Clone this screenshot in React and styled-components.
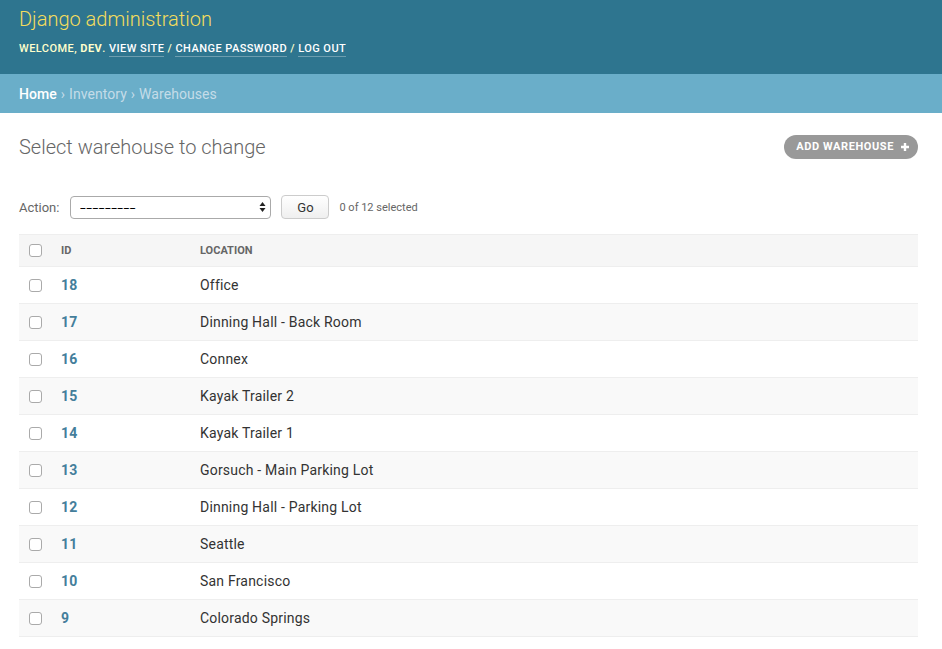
import React from "react";
import styled, { createGlobalStyle } from "styled-components";

const GlobalStyle = createGlobalStyle`
    html, body {
        margin: 0;
        padding: 0;
        background: #fff;
        font-family: Roboto, "Liberation Sans", sans-serif;
        color: #333;
        font-size: 14px;
    }
`;

const rows = [
    [18, "Office"],
    [17, "Dinning Hall - Back Room"],
    [16, "Connex"],
    [15, "Kayak Trailer 2"],
    [14, "Kayak Trailer 1"],
    [13, "Gorsuch - Main Parking Lot"],
    [12, "Dinning Hall - Parking Lot"],
    [11, "Seattle"],
    [10, "San Francisco"],
    [9, "Colorado Springs"],
];

const Header = styled.div`
    background: #2e758f;
    height: 74px;
    padding: 0 19px;
    box-sizing: border-box;
    display: flex;
    flex-direction: column;
`;

const Branding = styled.h1`
    margin: 6px 0 0;
    font-size: 20px;
    font-weight: 300;
    color: #f5dd5d;
    line-height: 26px;
`;

const UserTools = styled.div`
    margin-top: 10px;
    font-size: 11px;
    letter-spacing: 0.45px;
    text-transform: uppercase;
    color: #ffc;
    font-weight: 500;
    line-height: 14px;

    strong {
        font-weight: 700;
    }
`;

const ToolLink = styled.a`
    color: #fff;
    font-weight: 500;
    text-decoration: none;
    border-bottom: 1px solid rgba(255, 255, 255, 0.3);
    padding-bottom: 1px;
`;

const Breadcrumbs = styled.div`
    background: #6aaec9;
    height: 39px;
    padding: 0 19px;
    display: flex;
    align-items: center;
    font-size: 14px;
    letter-spacing: 0.05px;
    color: #c4dce8;

    a {
        color: #c4dce8;
        text-decoration: none;
    }
    a.home {
        color: #fff;
        font-weight: 500;
    }
`;

const Sep = styled.span`
    margin: 0 4px;
`;

const Content = styled.div`
    padding: 20px 24px 0 19px;
`;

const TitleRow = styled.div`
    display: flex;
    justify-content: space-between;
    align-items: center;
    height: 27px;
`;

const Title = styled.h2`
    margin: 0;
    font-size: 20px;
    font-weight: 300;
    color: #666;
`;

const AddButton = styled.a`
    display: flex;
    align-items: center;
    gap: 6px;
    height: 24px;
    padding: 0 8px 0 12px;
    background: #999;
    border-radius: 12px;
    color: #fff;
    font-size: 11px;
    font-weight: 700;
    letter-spacing: 0.6px;
    text-transform: uppercase;
`;

const Actions = styled.div`
    display: flex;
    align-items: center;
    margin-top: 35px;
    height: 24px;
    font-size: 13px;
    color: #666;
`;

const Label = styled.span`
    margin-right: 11px;
`;

const Select = styled.div`
    width: 201px;
    height: 23px;
    box-sizing: border-box;
    border: 1px solid #aaa;
    border-radius: 4px;
    display: flex;
    align-items: center;
    justify-content: space-between;
    padding: 0 4px 0 9px;
    color: #000;
    font-size: 13px;
    background: #fff;
`;

const Dashes = styled.span`
    display: inline-block;
    letter-spacing: 0.3px;
    transform: scaleX(1.6);
    transform-origin: left center;
`;

const GoButton = styled.button`
    margin-left: 10px;
    width: 48px;
    height: 24px;
    border: 1px solid #ccc;
    border-radius: 4px;
    background: linear-gradient(#fff, #efefef);
    font-family: inherit;
    font-size: 13px;
    color: #333;
    padding: 0;
`;

const Counter = styled.span`
    margin-left: 10px;
    font-size: 11px;
    color: #666;
`;

const Table = styled.table`
    margin-top: 15px;
    width: 899px;
    border-collapse: collapse;
    table-layout: fixed;
`;

const Th = styled.th`
    background: #f6f6f6;
    border-top: 1px solid #eee;
    border-bottom: 1px solid #eee;
    height: 31px;
    padding: 0 10px;
    text-align: left;
    font-size: 11px;
    font-weight: 700;
    text-transform: uppercase;
    color: #666;
    vertical-align: middle;
`;

const Tr = styled.tr`
    background: ${(p) => (p.$alt ? "#f9f9f9" : "#fff")};
`;

const Td = styled.td`
    height: 36px;
    padding: 0 10px;
    border-bottom: 1px solid #eee;
    font-size: 14px;
    letter-spacing: 0.2px;
    color: #333;
    vertical-align: middle;
`;

const IdLink = styled.a`
    color: #447e9b;
    font-weight: 700;
    font-size: 14px;
    text-decoration: none;
`;

const Box = styled.span`
    display: block;
    width: 11px;
    height: 11px;
    border: 1px solid #aaa;
    border-radius: 3px;
    background: #fff;
`;

function Arrows() {
    return (
        <svg width="7" height="12" viewBox="0 0 7 12">
            <path d="M3.5 1 L6.5 5 L0.5 5 Z" fill="#222" />
            <path d="M3.5 11 L6.5 7 L0.5 7 Z" fill="#222" />
        </svg>
    );
}

function Plus() {
    return (
        <svg width="10" height="10" viewBox="0 0 10 10">
            <path d="M5 1 V9 M1 5 H9" stroke="#fff" strokeWidth="2.4" />
        </svg>
    );
}

function App() {
    return (
        <>
            <GlobalStyle />
            <Header>
                <Branding>Django administration</Branding>
                <UserTools>
                    Welcome, <strong>dev</strong>.{" "}
                    <ToolLink>View site</ToolLink> /{" "}
                    <ToolLink>Change password</ToolLink> /{" "}
                    <ToolLink>Log out</ToolLink>
                </UserTools>
            </Header>
            <Breadcrumbs>
                <a className="home">Home</a>
                <Sep>›</Sep>
                <a>Inventory</a>
                <Sep>›</Sep>
                Warehouses
            </Breadcrumbs>
            <Content>
                <TitleRow>
                    <Title>Select warehouse to change</Title>
                    <AddButton>
                        Add warehouse <Plus />
                    </AddButton>
                </TitleRow>
                <Actions>
                    <Label>Action:</Label>
                    <Select>
                        <Dashes>---------</Dashes>
                        <Arrows />
                    </Select>
                    <GoButton>Go</GoButton>
                    <Counter>0 of 12 selected</Counter>
                </Actions>
                <Table>
                    <colgroup>
                        <col style={{ width: 32 }} />
                        <col style={{ width: 139 }} />
                        <col />
                    </colgroup>
                    <thead>
                        <tr>
                            <Th>
                                <Box />
                            </Th>
                            <Th>Id</Th>
                            <Th>Location</Th>
                        </tr>
                    </thead>
                    <tbody>
                        {rows.map(([id, loc], i) => (
                            <Tr key={id} $alt={i % 2 === 1}>
                                <Td>
                                    <Box />
                                </Td>
                                <Td>
                                    <IdLink>{id}</IdLink>
                                </Td>
                                <Td>{loc}</Td>
                            </Tr>
                        ))}
                    </tbody>
                </Table>
            </Content>
        </>
    );
}

export default App;
